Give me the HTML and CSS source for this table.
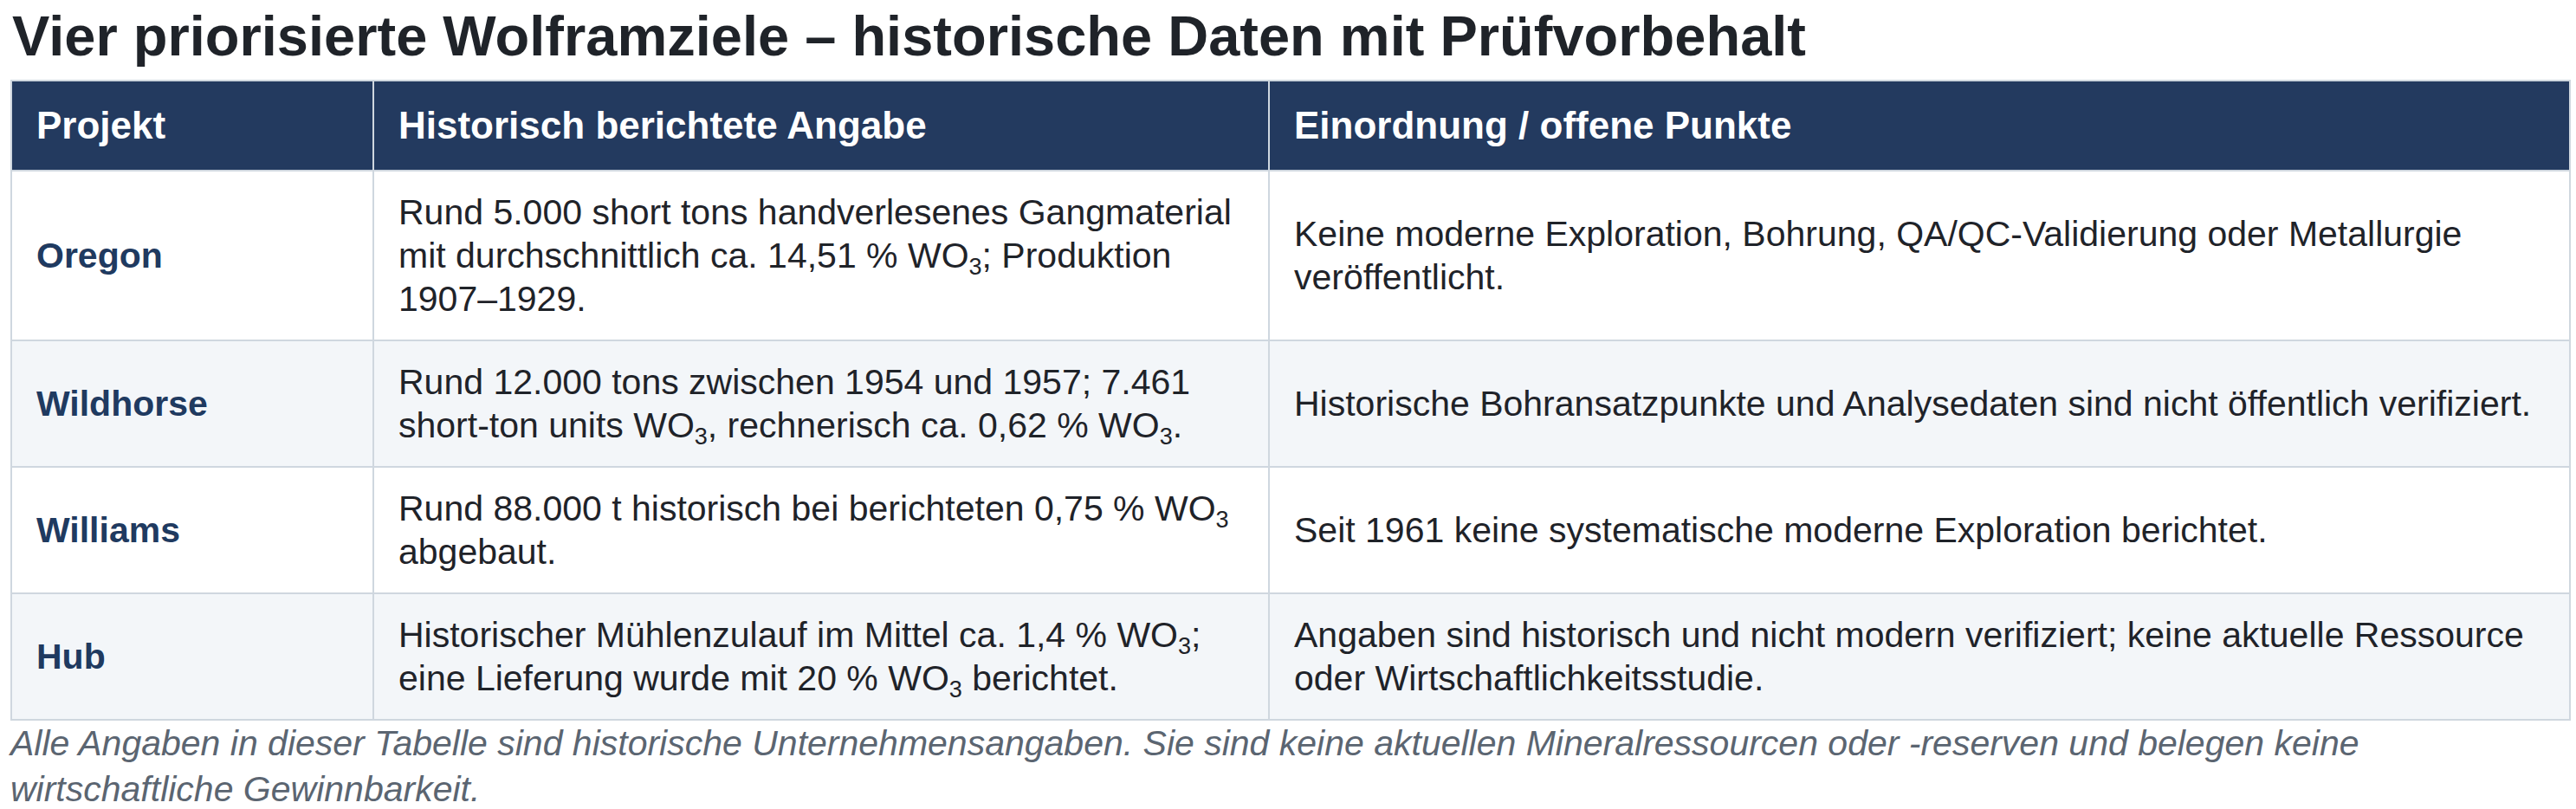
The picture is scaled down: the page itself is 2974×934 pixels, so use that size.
FILE: index.html
```html
<!DOCTYPE html>
<html lang="de">
<head>
<meta charset="utf-8">
<title>Wolframziele</title>
<link rel="stylesheet" href="styles.css">
</head>
<body>
<h1 class="title">Vier priorisierte Wolframziele – historische Daten mit Prüfvorbehalt</h1>
<table class="data">
  <colgroup>
    <col class="c1">
    <col class="c2">
    <col class="c3">
  </colgroup>
  <thead>
    <tr>
      <th>Projekt</th>
      <th>Historisch berichtete Angabe</th>
      <th>Einordnung / offene Punkte</th>
    </tr>
  </thead>
  <tbody>
    <tr>
      <td class="name">Oregon</td>
      <td>Rund 5.000 short tons handverlesenes Gangmaterial mit durchschnittlich ca. 14,51 % WO<sub>3</sub>; Produktion 1907–1929.</td>
      <td>Keine moderne Exploration, Bohrung, QA/QC-Validierung oder Metallurgie veröffentlicht.</td>
    </tr>
    <tr>
      <td class="name">Wildhorse</td>
      <td>Rund 12.000 tons zwischen 1954 und 1957; 7.461 short-ton units WO<sub>3</sub>, rechnerisch ca. 0,62 % WO<sub>3</sub>.</td>
      <td>Historische Bohransatzpunkte und Analysedaten sind nicht öffentlich verifiziert.</td>
    </tr>
    <tr>
      <td class="name">Williams</td>
      <td>Rund 88.000 t historisch bei berichteten 0,75 % WO<sub>3</sub> abgebaut.</td>
      <td>Seit 1961 keine systematische moderne Exploration berichtet.</td>
    </tr>
    <tr>
      <td class="name">Hub</td>
      <td>Historischer Mühlenzulauf im Mittel ca. 1,4 % WO<sub>3</sub>; eine Lieferung wurde mit 20 % WO<sub>3</sub> berichtet.</td>
      <td>Angaben sind historisch und nicht modern verifiziert; keine aktuelle Ressource oder Wirtschaftlichkeitsstudie.</td>
    </tr>
  </tbody>
</table>
<p class="note">Alle Angaben in dieser Tabelle sind historische Unternehmensangaben. Sie sind keine aktuellen Mineralressourcen oder -reserven und belegen keine wirtschaftliche Gewinnbarkeit.</p>
</body>
</html>
```
FILE: styles.css
```css
html, body {
  margin: 0;
  padding: 0;
  background: #ffffff;
}
body {
  padding: 4px 8px 0 12px;
  font-family: "Liberation Sans", Arial, sans-serif;
  color: #1f2329;
}
.title {
  margin: 0 0 12px 2px;
  font-size: 65px;
  line-height: 76px;
  font-weight: 700;
  color: #1f2329;
}
.data {
  width: 2954px;
  border-collapse: collapse;
  table-layout: fixed;
  border: 2px solid #cfd7df;
  font-size: 41px;
  line-height: 50px;
}
.c1 { width: 418px; }
.c2 { width: 1034px; }
.c3 { width: 1502px; }
.data th,
.data td {
  border: 2px solid #cfd7df;
  padding: 22px 28px;
  text-align: left;
  vertical-align: middle;
}
.data th {
  background: #233a5f;
  color: #ffffff;
  font-size: 44px;
  font-weight: 700;
  padding-top: 26px;
  padding-bottom: 26px;
}
.data tbody tr:nth-child(even) td {
  background: #f3f6f9;
}
.data td.name {
  font-weight: 700;
  color: #1f3a60;
}
.data sub {
  font-size: 0.66em;
  line-height: 0;
  vertical-align: -0.3em;
}
.note {
  margin: 0;
  font-size: 41px;
  line-height: 53px;
  font-style: italic;
  color: #5b6571;
  max-width: 2800px;
}
```
